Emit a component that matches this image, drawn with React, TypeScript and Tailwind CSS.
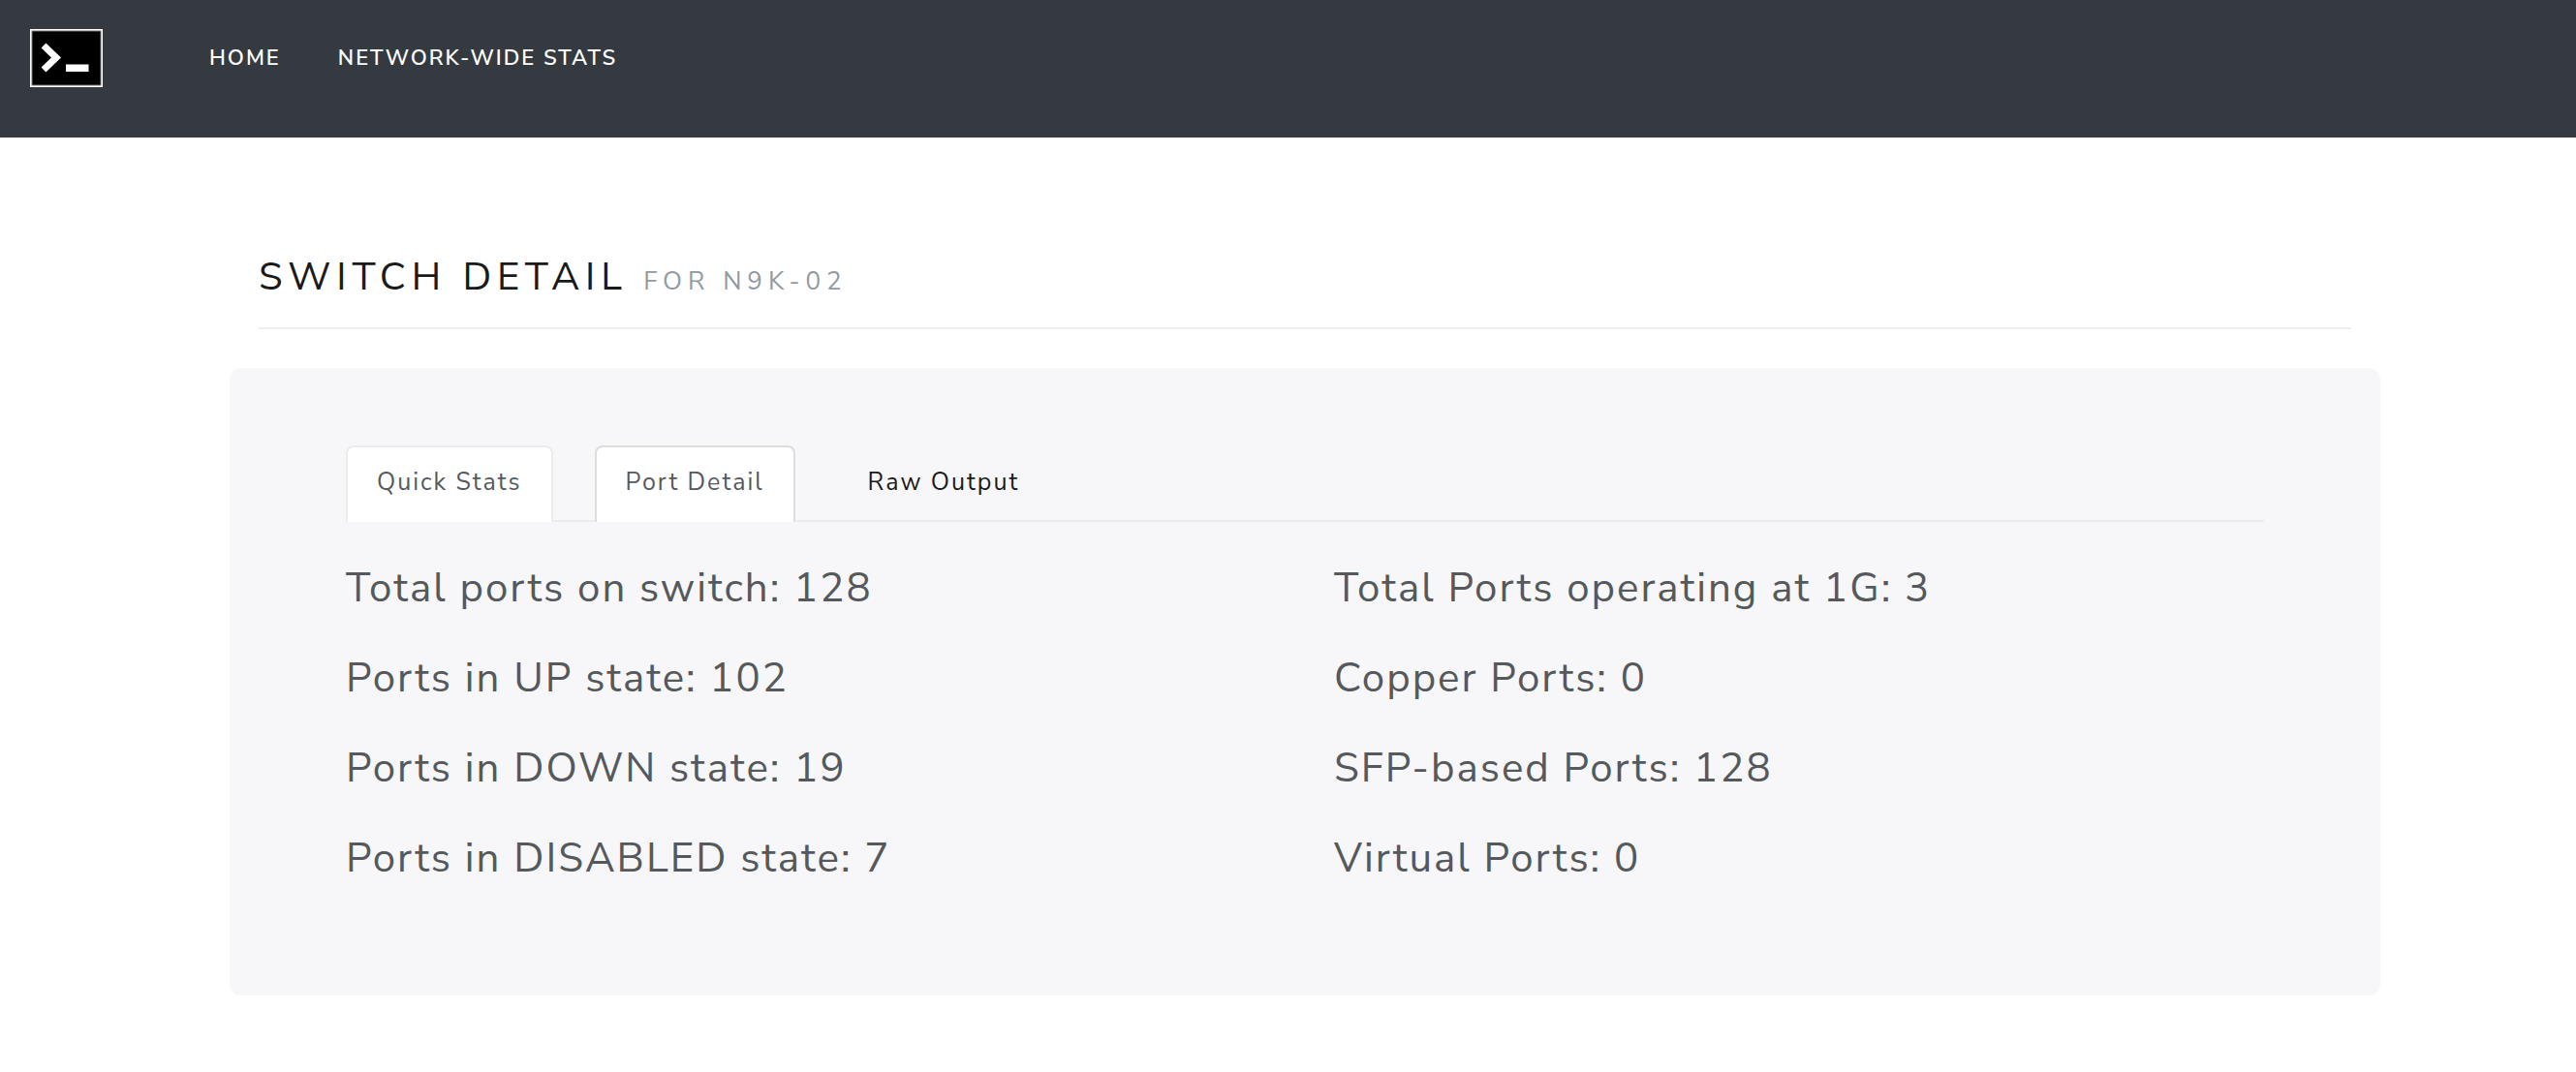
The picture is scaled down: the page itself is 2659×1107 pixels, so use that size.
import { useState } from "react";

const navLinks = ["Home", "Network-Wide Stats"];

const tabs = ["Quick Stats", "Port Detail", "Raw Output"];

const portStates = [
  "Total ports on switch: 128",
  "Ports in UP state: 102",
  "Ports in DOWN state: 19",
  "Ports in DISABLED state: 7",
];

const portTypes = [
  "Total Ports operating at 1G: 3",
  "Copper Ports: 0",
  "SFP-based Ports: 128",
  "Virtual Ports: 0",
];

function Logo() {
  return (
    <svg viewBox="0 0 75 60" className="h-[60px] w-[75px]" aria-hidden="true">
      <rect width="75" height="60" fill="#fff" />
      <rect x="1.5" y="1.5" width="72" height="57" fill="#777" />
      <rect x="2.5" y="2.5" width="70" height="55" fill="#000" />
      <path d="M14 17 27 29.5 14 42" fill="none" stroke="#fff" strokeWidth="7" />
      <rect x="37" y="36.5" width="23.5" height="7.5" fill="#fff" />
    </svg>
  );
}

function tabStyle(name: string, current: string) {
  if (name === current) return "border-[#ddd] bg-white text-[#55595c]";
  if (name === "Quick Stats") return "border-[#ececee] bg-white text-[#55595c]";
  return "border-transparent text-[#1a1a1a]";
}

function StatColumn({ items }: { items: string[] }) {
  return (
    <ul className="flex flex-col gap-[33px]">
      {items.map((item) => (
        <li key={item} className="text-[42px] leading-[60px] tracking-[2px]">
          {item}
        </li>
      ))}
    </ul>
  );
}

export default function App() {
  const [current, setCurrent] = useState("Port Detail");

  return (
    <div className="min-h-screen bg-white font-['Nunito_Sans','Lato',sans-serif] font-normal text-[#55595c]">
      <header className="flex h-[142px] items-start bg-[#343a40] px-[31px] pt-[30px]">
        <a href="#" aria-label="Terminal home">
          <Logo />
        </a>
        <nav className="ml-[110px] flex gap-[59px] pt-[14px]">
          {navLinks.map((link) => (
            <a
              key={link}
              href="#"
              className="text-[22px] leading-8 font-semibold tracking-[2px] text-white uppercase"
            >
              {link}
            </a>
          ))}
        </nav>
      </header>

      <main className="pt-[109px] pr-[202px] pb-20 pl-[237px]">
        <div className="mx-[30px] border-b-2 border-[#eceeef] pb-[17px]">
          <h1 className="text-[40px] leading-[70px] tracking-[6px] text-[#1a1a1a] uppercase">
            Switch Detail{" "}
            <small className="text-[26px] leading-none font-normal tracking-[6px] text-[#919aa1]">for N9K-02</small>
          </h1>
        </div>

        <section className="mt-10 rounded-xl bg-[#f7f7f9] px-[120px] pt-20 pb-[111px]">
          <div role="tablist" className="flex gap-[43px] border-b-2 border-[#ececee]">
            {tabs.map((tab) => (
              <button
                key={tab}
                type="button"
                role="tab"
                aria-selected={tab === current}
                onClick={() => setCurrent(tab)}
                className={`-mb-0.5 h-[79px] rounded-t-lg border-2 border-b-0 px-[30px] pb-[3px] text-[25px] tracking-[2px] ${tabStyle(tab, current)}`}
              >
                {tab}
              </button>
            ))}
          </div>

          <div role="tabpanel" className="grid grid-cols-2 gap-[60px] pt-[39px]">
            <StatColumn items={portStates} />
            <StatColumn items={portTypes} />
          </div>
        </section>
      </main>
    </div>
  );
}
